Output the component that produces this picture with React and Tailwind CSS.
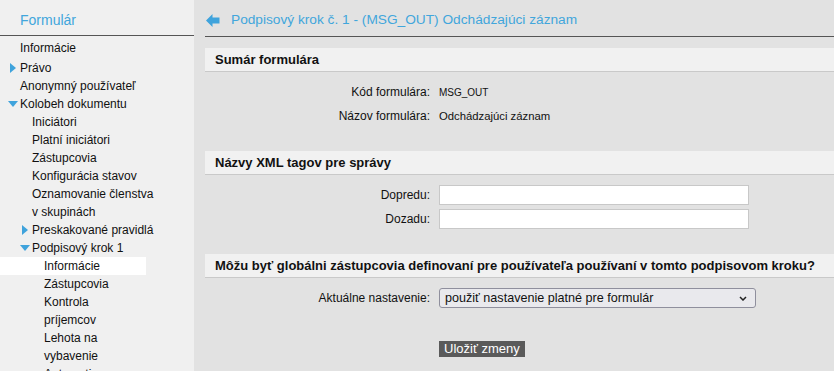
import React from "react";

const font = { fontFamily: '"Liberation Sans", Arial, sans-serif' };

function TriRight() {
  return (
    <svg width="6" height="10" viewBox="0 0 6 10" className="absolute" style={{ left: -10, top: 4 }}>
      <polygon points="0,0 6,5 0,10" fill="#3fa3dc" />
    </svg>
  );
}
function TriDown() {
  return (
    <svg width="10" height="6" viewBox="0 0 10 6" className="absolute" style={{ left: -12, top: 6 }}>
      <polygon points="0,0 10,0 5,6" fill="#3fa3dc" />
    </svg>
  );
}

function Item({ level, children, tri, active, first }) {
  const pl = level === 0 ? "pl-[20px]" : level === 1 ? "pl-[32px]" : "pl-[44px]";
  return (
    <div className={`${pl} ${active ? "bg-white w-[146px]" : ""} ${first ? "mb-[2px]" : ""} leading-[18px]`}>
      <span className="relative inline-block">
        {tri === "r" && <TriRight />}
        {tri === "d" && <TriDown />}
        {children}
      </span>
    </div>
  );
}

function SectionHeader({ children }) {
  return (
    <div className="h-[24px] bg-[#f1f1f1] border-b border-[#c9c9c9] flex items-center pl-[10px] text-[13px] font-bold text-[#111]">
      {children}
    </div>
  );
}

function Row({ label, children }) {
  return (
    <div className="h-[24px] flex items-center">
      <div className="w-[225px] text-right text-[12px] text-[#111]">{label}</div>
      <div className="ml-[9px] flex items-center">{children}</div>
    </div>
  );
}

export default function App() {
  return (
    <div className="flex h-[371px] overflow-hidden bg-[#e2e2e2]" style={font}>
      <div className="w-[194px] shrink-0 bg-[#f0f0f0] h-full">
        <div className="h-[36px] border-b border-[#555] pt-[11px] pl-[20px] text-[14px] leading-[18px] text-[#41a6dc]">
          Formulár
        </div>
        <div className="pt-[3px] text-[12px] text-[#111]">
          <Item level={0} first>Informácie</Item>
          <Item level={0} tri="r">Právo</Item>
          <Item level={0}>Anonymný používateľ</Item>
          <Item level={0} tri="d">Kolobeh dokumentu</Item>
          <Item level={1}>Iniciátori</Item>
          <Item level={1}>Platní iniciátori</Item>
          <Item level={1}>Zástupcovia</Item>
          <Item level={1}>Konfigurácia stavov</Item>
          <Item level={1}>Oznamovanie členstva<br />v skupinách</Item>
          <Item level={1} tri="r">Preskakované pravidlá</Item>
          <Item level={1} tri="d">Podpisový krok 1</Item>
          <Item level={2} active>Informácie</Item>
          <Item level={2}>Zástupcovia</Item>
          <Item level={2}>Kontrola<br />príjemcov</Item>
          <Item level={2}>Lehota na<br />vybavenie</Item>
          <Item level={2}>Automatizmus</Item>
        </div>
      </div>
      <div className="flex-1 pl-[11px] min-w-0">
        <div className="h-[37px] border-b border-[#555] flex items-center pt-[4px]">
          <svg width="14" height="13" viewBox="0 0 14 13" className="ml-[1px]">
            <polygon points="0,6.5 6.5,0 6.5,3.5 13.5,3.5 13.5,9.5 6.5,9.5 6.5,13" fill="#3fa3dc" />
          </svg>
          <span className="ml-[11px] text-[13.7px] text-[#41a6dc]">
            Podpisový krok č. 1 - (MSG_OUT) Odchádzajúci záznam
          </span>
        </div>

        <div className="mt-[11px]">
          <SectionHeader>Sumár formulára</SectionHeader>
          <div className="pt-[8px]">
            <Row label="Kód formulára:">
              <span className="text-[10px] text-[#111]">MSG_OUT</span>
            </Row>
            <Row label="Názov formulára:">
              <span className="text-[11.3px] text-[#111]">Odchádzajúci záznam</span>
            </Row>
          </div>
        </div>

        <div className="mt-[23px]">
          <SectionHeader>Názvy XML tagov pre správy</SectionHeader>
          <div className="pt-[8px]">
            <Row label="Dopredu:">
              <input className="w-[310px] h-[20px] bg-white border border-[#c8c8c8] outline-none" />
            </Row>
            <Row label="Dozadu:">
              <input className="w-[310px] h-[20px] bg-white border border-[#c8c8c8] outline-none" />
            </Row>
          </div>
        </div>

        <div className="mt-[23px]">
          <SectionHeader>Môžu byť globálni zástupcovia definovaní pre používateľa používaní v tomto podpisovom kroku?</SectionHeader>
          <div className="pt-[8px]">
            <Row label="Aktuálne nastavenie:">
              <div className="w-[317px] h-[20px] rounded-[3px] border border-[#8f8f9d] bg-[#e9e9ed] flex items-center justify-between pl-[5px] pr-[8px] text-[12.6px] text-[#111]">
                <span>použiť nastavenie platné pre formulár</span>
                <svg width="8" height="5" viewBox="0 0 8 5">
                  <polyline points="1,1 4,4 7,1" fill="none" stroke="#222" strokeWidth="1.5" />
                </svg>
              </div>
            </Row>
            <div className="mt-[26px] ml-[234px]">
              <button className="h-[16px] px-[5px] bg-[#5a5a5a] text-white text-[13px] leading-[16px]">Uložiť zmeny</button>
            </div>
          </div>
        </div>

        <div className="mt-[18px] h-[24px] bg-[#f1f1f1] border-t border-[#d0d0d0]"></div>
      </div>
    </div>
  );
}
